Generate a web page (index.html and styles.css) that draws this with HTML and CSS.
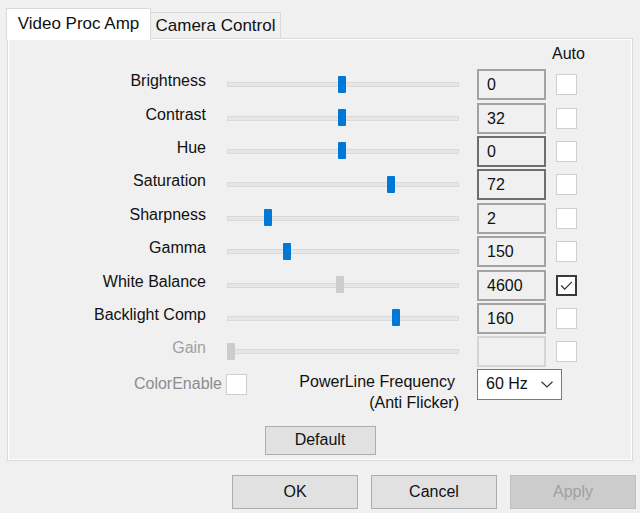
FILE: index.html
```html
<!DOCTYPE html>
<html>
<head>
<meta charset="utf-8">
<link rel="stylesheet" href="styles.css">
</head>
<body>
<div class="dialog">
  <div class="tabs">
    <div class="tab tab-active">Video Proc Amp</div>
    <div class="tab tab-other">Camera Control</div>
  </div>
  <div class="panel">
    <div class="auto-head">Auto</div>
    <div class="rows">
      <div class="row">
        <span class="label">Brightness</span>
        <div class="slider"><div class="track"></div><div class="thumb" style="left:111px"></div></div>
        <div class="value">0</div>
        <div class="check"></div>
      </div>
      <div class="row">
        <span class="label">Contrast</span>
        <div class="slider"><div class="track"></div><div class="thumb" style="left:111px"></div></div>
        <div class="value">32</div>
        <div class="check"></div>
      </div>
      <div class="row">
        <span class="label">Hue</span>
        <div class="slider"><div class="track"></div><div class="thumb" style="left:111px"></div></div>
        <div class="value value-dark">0</div>
        <div class="check"></div>
      </div>
      <div class="row">
        <span class="label">Saturation</span>
        <div class="slider"><div class="track"></div><div class="thumb" style="left:160px"></div></div>
        <div class="value value-dark">72</div>
        <div class="check"></div>
      </div>
      <div class="row">
        <span class="label">Sharpness</span>
        <div class="slider"><div class="track"></div><div class="thumb" style="left:37px"></div></div>
        <div class="value">2</div>
        <div class="check"></div>
      </div>
      <div class="row">
        <span class="label">Gamma</span>
        <div class="slider"><div class="track"></div><div class="thumb" style="left:56px"></div></div>
        <div class="value">150</div>
        <div class="check"></div>
      </div>
      <div class="row">
        <span class="label">White Balance</span>
        <div class="slider"><div class="track"></div><div class="thumb thumb-off" style="left:109px"></div></div>
        <div class="value">4600</div>
        <div class="check check-on"><svg width="19" height="19" viewBox="0 0 19 19"><path d="M3.5 9.5 L7.5 13.5 L15.5 5.5" fill="none" stroke="#333" stroke-width="1.4"/></svg></div>
      </div>
      <div class="row">
        <span class="label">Backlight Comp</span>
        <div class="slider"><div class="track"></div><div class="thumb" style="left:165px"></div></div>
        <div class="value">160</div>
        <div class="check"></div>
      </div>
      <div class="row">
        <span class="label label-off">Gain</span>
        <div class="slider"><div class="track"></div><div class="thumb thumb-off" style="left:0px"></div></div>
        <div class="value value-off"></div>
        <div class="check"></div>
      </div>
    </div>
    <div class="bottom">
      <span class="color-label">ColorEnable</span>
      <div class="check check-color"></div>
      <div class="pl-label"><span class="pl-line1">PowerLine Frequency</span><span class="pl-line2">(Anti Flicker)</span></div>
      <div class="select">
        <span>60 Hz</span>
        <svg class="chev" width="12" height="7" viewBox="0 0 12 7"><path d="M0.5 0.8 L6 6 L11.5 0.8" fill="none" stroke="#333" stroke-width="1.2"/></svg>
      </div>
    </div>
    <div class="default-wrap"><button class="btn btn-default">Default</button></div>
  </div>
  <div class="buttons">
    <button class="btn btn-main">OK</button>
    <button class="btn btn-main">Cancel</button>
    <button class="btn btn-main btn-disabled">Apply</button>
  </div>
</div>
</body>
</html>
```
FILE: styles.css
```css
html, body {
  margin: 0;
  padding: 0;
  background: #f0f0f0;
}
body {
  width: 640px;
  height: 513px;
  overflow: hidden;
  font-family: "Liberation Sans", Arial, sans-serif;
  font-size: 16px;
  color: #111;
}
.dialog {
  width: 640px;
  height: 513px;
}
.tabs {
  display: flex;
  align-items: flex-end;
  padding-top: 8px;
  padding-left: 6px;
  height: 38px;
  box-sizing: border-box;
  font-size: 17px;
}
.tab {
  box-sizing: border-box;
  display: flex;
  align-items: center;
  justify-content: center;
  border: 1px solid #d9d9d9;
  border-bottom: none;
}
.tab-active {
  width: 145px;
  height: 32px;
  background: #fff;
  position: relative;
  z-index: 2;
  padding-bottom: 2px;
  margin-bottom: -2px;
}
.tab-other {
  width: 130px;
  height: 26px;
  border-left: none;
  background: #f0f0f0;
  padding-top: 1px;
}
.panel {
  margin: 0 7px;
  height: 423px;
  box-sizing: border-box;
  border: 1px solid #d9d9d9;
  box-shadow: inset 0 0 0 1px #fff;
  display: flex;
  flex-direction: column;
}
.auto-head {
  height: 29px;
  line-height: 29px;
  padding-left: 544px;
}
.rows {
  display: flex;
  flex-direction: column;
}
.row {
  height: 33.4px;
  display: flex;
  align-items: center;
}
.label {
  width: 198px;
  text-align: right;
  padding-bottom: 7px;
  line-height: 18px;
}
.label-off {
  color: #a0a0a0;
}
.slider {
  margin-left: 21px;
  width: 232px;
  height: 18px;
  position: relative;
  display: flex;
  align-items: center;
}
.track {
  width: 100%;
  height: 5px;
  box-sizing: border-box;
  background: #e6e6e6;
  border: 1px solid #dadada;
}
.thumb {
  position: absolute;
  top: 0;
  width: 8px;
  height: 17px;
  background: #0078d7;
  border-radius: 1px;
}
.thumb-off {
  background: #cccccc;
}
.value {
  margin-left: 18px;
  width: 69px;
  height: 31px;
  box-sizing: border-box;
  border: 2px solid #a3a3a3;
  background: #f0f0f0;
  padding-left: 8px;
  line-height: 27px;
}
.value-dark {
  border-color: #6e6e6e;
}
.value-off {
  border-color: #d5d5d5;
}
.check {
  margin-left: 10px;
  width: 21px;
  height: 21px;
  box-sizing: border-box;
  border: 1px solid #cfcfcf;
  background: #fff;
  display: flex;
  align-items: center;
  justify-content: center;
}
.check-on {
  border: 2px solid #3a3a3a;
}
.bottom {
  display: flex;
  align-items: flex-start;
  height: 45px;
}
.color-label {
  width: 214px;
  text-align: right;
  color: #8c8c8c;
  margin-top: 5px;
  line-height: 20px;
}
.check-color {
  margin-left: 4px;
  margin-top: 5px;
}
.pl-label {
  width: 212px;
  display: flex;
  flex-direction: column;
  align-items: flex-end;
  line-height: 21px;
  margin-top: 2px;
}
.pl-line1 {
  margin-right: 4px;
}
.select {
  margin-left: 18px;
  width: 85px;
  height: 31px;
  box-sizing: border-box;
  border: 1px solid #7a7a7a;
  background: #fff;
  display: flex;
  align-items: center;
  padding-left: 8px;
  padding-right: 8px;
  justify-content: space-between;
}
.default-wrap {
  display: flex;
  justify-content: center;
  margin-top: 12px;
}
.btn {
  font-family: "Liberation Sans", Arial, sans-serif;
  font-size: 16px;
  color: #111;
  background: #e1e1e1;
  border: 1px solid #adadad;
  border-radius: 0;
  padding: 0;
  margin: 0;
}
.btn-default {
  width: 111px;
  height: 29px;
}
.buttons {
  display: flex;
  justify-content: flex-end;
  gap: 13px;
  padding-right: 4px;
  margin-top: 14px;
}
.btn-main {
  width: 126px;
  height: 34px;
}
.btn-disabled {
  background: #cccccc;
  border-color: #bfbfbf;
  color: #a0a0a0;
}
```
